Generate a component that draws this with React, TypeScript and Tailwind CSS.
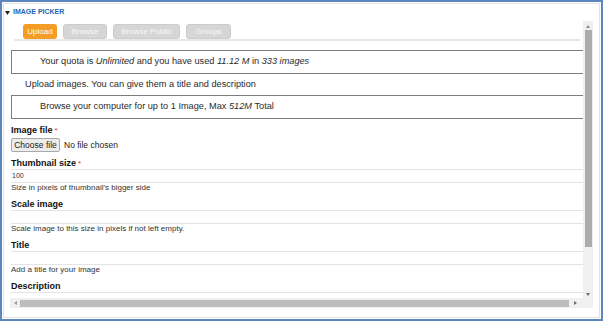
import React from "react";

function Label({ text, req }: { text: string; req?: boolean }) {
  return (
    <div className="h-[11px] leading-[11px] text-[9px] font-bold text-[#111] whitespace-nowrap">
      {text}
      {req && <span className="text-[#e0302a] font-normal text-[8px] ml-[2px] align-top">*</span>}
    </div>
  );
}

function Field({ label, req, value, desc }: { label: string; req?: boolean; value?: string; desc: string }) {
  return (
    <div className="flex flex-col mb-[6px]">
      <Label text={label} req={req} />
      <div className="h-[14px] w-[600px] border-y border-[#e4e4e4] text-[7px] leading-[12px] text-[#333] pl-[1px]">
        {value}
      </div>
      <div className="h-[10px] leading-[10px] text-[8px] text-[#333] whitespace-nowrap">{desc}</div>
    </div>
  );
}

export default function App() {
  return (
    <div className="w-[603px] h-[321px] border-2 border-[#5d86bf] bg-white p-[1px] font-['Liberation_Sans',Arial,sans-serif] overflow-hidden">
      <div className="h-full border border-[#e3e3e3] flex flex-col">
        {/* header */}
        <div className="h-[17px] flex items-center pl-[1px] shrink-0">
          <svg width="5" height="4" viewBox="0 0 5 4" className="mr-[3px] mt-[1px]">
            <polygon points="0,0 5,0 2.5,4" fill="#222" />
          </svg>
          <span className="text-[7px] font-bold text-[#1d65b3]">IMAGE PICKER</span>
        </div>
        {/* scroll area */}
        <div className="flex-1 flex flex-col ml-[6px] mr-[6px] mb-[9px] min-h-0">
          <div className="flex flex-1 min-h-0">
            <div className="flex-1 overflow-hidden flex flex-col min-w-0">
              {/* tabs */}
              <div className="pt-[3px] ml-[4px] mr-[3px] border-b-2 border-[#e8e8e8] flex gap-[5px] pl-[9px] shrink-0">
                <div className="h-[15px] w-[34px] rounded-[3px] bg-[#f39c26] text-white text-[8px] flex items-center justify-center">Upload</div>
                <div className="h-[15px] w-[44px] rounded-[3px] bg-[#d6d6d6] border border-[#cccccc] text-[#f8f8f8] text-[8px] flex items-center justify-center ml-[1px]">Browse</div>
                <div className="h-[15px] w-[67px] rounded-[3px] bg-[#d6d6d6] border border-[#cccccc] text-[#f8f8f8] text-[8px] flex items-center justify-center ml-[1px]">Browse Public</div>
                <div className="h-[15px] w-[45px] rounded-[3px] bg-[#d6d6d6] border border-[#cccccc] text-[#f8f8f8] text-[8px] flex items-center justify-center ml-[1px]">Groups</div>
              </div>
              {/* info boxes */}
              <div className="mt-[9px] ml-[1px] w-[600px] flex flex-col shrink-0">
                <div className="h-[24px] border border-[#7d7d7d] text-[9.2px] text-[#2a2a2a] flex items-center pl-[28px] whitespace-nowrap">
                  Your quota is&nbsp;<i>Unlimited</i>&nbsp;and you have used&nbsp;<i>11.12 M</i>&nbsp;in&nbsp;<i>333 images</i>
                </div>
                <div className="h-[21px] text-[9.2px] text-[#2a2a2a] flex items-center pl-[14px] whitespace-nowrap">
                  Upload images. You can give them a title and description
                </div>
                <div className="h-[24px] border border-[#7d7d7d] text-[9.2px] text-[#2a2a2a] flex items-center pl-[28px] whitespace-nowrap">
                  Browse your computer for up to 1 Image, Max&nbsp;<i>512M</i>&nbsp;Total
                </div>
              </div>
              {/* form */}
              <div className="ml-[1px] mt-[6px] flex flex-col shrink-0">
                <Label text="Image file" req />
                <div className="flex items-center mt-[2px] h-[14px] mb-[6px]">
                  <div className="h-[14px] w-[49px] border border-[#a9a9a9] rounded-[2px] bg-[#ececec] text-[8.5px] text-[#222] flex items-center justify-center">Choose file</div>
                  <span className="text-[8.5px] text-[#222] ml-[4px] whitespace-nowrap">No file chosen</span>
                </div>
                <Field label="Thumbnail size" req value="100" desc="Size in pixels of thumbnail's bigger side" />
                <Field label="Scale image" desc="Scale image to this size in pixels if not left empty." />
                <Field label="Title" desc="Add a title for your image" />
                <Label text="Description" />
                <div className="h-[14px] w-[600px] border-t border-[#e4e4e4]" />
              </div>
            </div>
            {/* vertical scrollbar */}
            <div className="w-[10px] bg-[#f0f0f0] flex flex-col items-center shrink-0">
              <div className="h-[9px] flex items-center justify-center pt-[1px]">
                <svg width="4" height="3" viewBox="0 0 4 3"><polygon points="0,3 4,3 2,0" fill="#8a8a8a" /></svg>
              </div>
              <div className="w-[7px] h-[217px] bg-[#acacac]" />
              <div className="flex-1" />
              <div className="h-[8px] flex items-center justify-center">
                <svg width="4" height="3" viewBox="0 0 4 3"><polygon points="0,0 4,0 2,3" fill="#6a6a6a" /></svg>
              </div>
            </div>
          </div>
          {/* horizontal scrollbar */}
          <div className="h-[10px] bg-[#f0f0f0] flex items-center shrink-0">
            <div className="w-[10px] flex items-center justify-center">
              <svg width="3" height="4" viewBox="0 0 3 4"><polygon points="3,0 3,4 0,2" fill="#9a9a9a" /></svg>
            </div>
            <div className="h-[7px] w-[549px] bg-[#bdbdbd]" />
            <div className="w-[12px] flex items-center justify-center">
              <svg width="3" height="4" viewBox="0 0 3 4"><polygon points="0,0 0,4 3,2" fill="#6a6a6a" /></svg>
            </div>
          </div>
        </div>
      </div>
    </div>
  );
}
